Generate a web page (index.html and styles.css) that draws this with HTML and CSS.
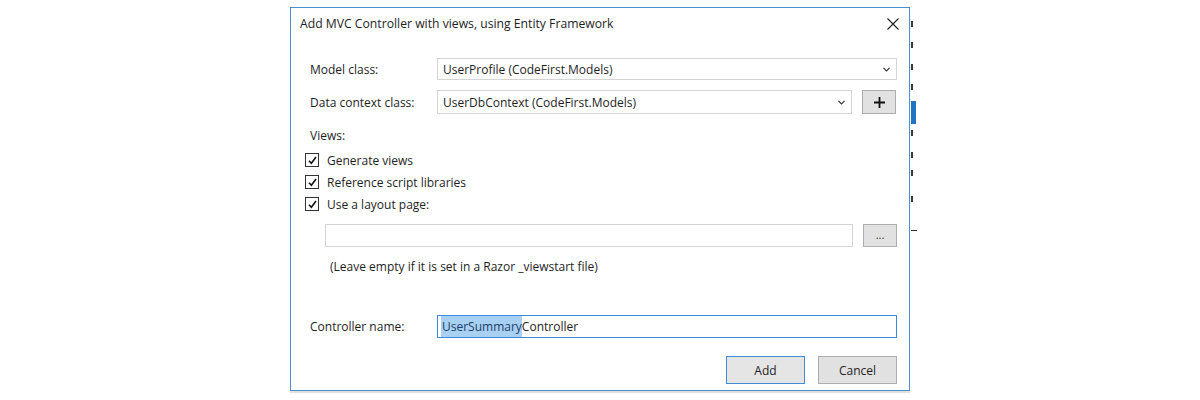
FILE: index.html
```html
<!DOCTYPE html>
<html>
<head>
<meta charset="utf-8">
<link rel="stylesheet" href="styles.css">
</head>
<body>
<div class="desk">
  <div class="dialog">
    <div class="titlebar">
      <span class="title">Add MVC Controller with views, using Entity Framework</span>
      <svg class="close" width="12" height="12" viewBox="0 0 12 12"><path d="M0.5 0.5 L11.5 11.5 M11.5 0.5 L0.5 11.5" stroke="#1e1e1e" stroke-width="1.1" fill="none"/></svg>
    </div>
    <div class="body">
      <div class="row r1">
        <span class="label">Model class:</span>
        <div class="combo wide"><span>UserProfile (CodeFirst.Models)</span><svg class="chev" width="7" height="5" viewBox="0 0 7 5"><path d="M0.5 0.8 L3.5 3.8 L6.5 0.8" stroke="#333" stroke-width="1.2" fill="none"/></svg></div>
      </div>
      <div class="row r2">
        <span class="label">Data context class:</span>
        <div class="combo narrow"><span>UserDbContext (CodeFirst.Models)</span><svg class="chev" width="7" height="5" viewBox="0 0 7 5"><path d="M0.5 0.8 L3.5 3.8 L6.5 0.8" stroke="#333" stroke-width="1.2" fill="none"/></svg></div>
        <div class="btn sq plus"><svg width="11" height="11" viewBox="0 0 11 11"><path d="M5.5 0 V11 M0 5.5 H11" stroke="#111" stroke-width="1.8" fill="none"/></svg></div>
      </div>
      <div class="views">Views:</div>
      <div class="checks">
        <div class="check"><span class="box"><svg width="9" height="9" viewBox="0 0 9 9"><path d="M1 4.8 L3.4 7.3 L8 1" stroke="#111" stroke-width="1.6" fill="none"/></svg></span><span>Generate views</span></div>
        <div class="check"><span class="box"><svg width="9" height="9" viewBox="0 0 9 9"><path d="M1 4.8 L3.4 7.3 L8 1" stroke="#111" stroke-width="1.6" fill="none"/></svg></span><span>Reference script libraries</span></div>
        <div class="check"><span class="box"><svg width="9" height="9" viewBox="0 0 9 9"><path d="M1 4.8 L3.4 7.3 L8 1" stroke="#111" stroke-width="1.6" fill="none"/></svg></span><span>Use a layout page:</span></div>
      </div>
      <div class="row r3">
        <div class="field path"></div>
        <div class="btn sq dots">...</div>
      </div>
      <div class="hint">(Leave empty if it is set in a Razor _viewstart file)</div>
      <div class="row r4">
        <span class="label">Controller name:</span>
        <div class="field name"><span class="sel">UserSummary</span>Controller</div>
      </div>
      <div class="actions">
        <div class="btn act default">Add</div>
        <div class="btn act">Cancel</div>
      </div>
    </div>
  </div>
  <div class="behind">
    <i class="m" style="margin-top:14px"></i>
    <i class="m" style="margin-top:15px"></i>
    <i class="m" style="margin-top:16px"></i>
    <i class="m" style="margin-top:14px"></i>
    <i class="blue"></i>
    <i class="m" style="margin-top:6px"></i>
    <i class="m" style="margin-top:16px"></i>
    <i class="m" style="margin-top:12px"></i>
    <i class="m" style="margin-top:20px"></i>
    <i class="line"></i>
  </div>
</div>
</body>
</html>
```
FILE: styles.css
```css
* { box-sizing: border-box; }
html, body { margin: 0; padding: 0; background: #fff; }
body {
  font-family: "Open Sans", "Noto Sans", "Liberation Sans", sans-serif;
  font-size: 12px;
  color: #1e1e1e;
  width: 1200px;
  height: 400px;
  overflow: hidden;
}
.desk { display: flex; align-items: flex-start; padding-left: 290px; padding-top: 7px; }
.dialog {
  width: 620px;
  height: 384px;
  border: 1px solid #4a8fd4;
  background: #fff;
  display: flex;
  flex-direction: column;
  box-shadow: 0 2px 1px rgba(0,0,0,0.12);
}
.titlebar {
  height: 31px;
  display: flex;
  align-items: center;
  padding-left: 9px;
  padding-right: 10px;
  justify-content: space-between;
}
.title { font-size: 12.2px; }
.close { margin-top: 0px; }
.body { padding: 19px 12px 0 19px; display: flex; flex-direction: column; }
.row { display: flex; align-items: center; }
.label { width: 127px; flex: none; }
.r1 { height: 22px; }
.r2 { height: 24px; margin-top: 10px; }
.combo {
  height: 100%;
  border: 1px solid #d4d4d4;
  background: #fff;
  display: flex;
  align-items: center;
  justify-content: space-between;
  padding: 0 6px 0 5px;
}
.combo.wide { width: 460px; }
.combo.narrow { width: 415px; }
.chev { margin-top: 1px; }
.btn {
  border: 1px solid #adadad;
  background: #e1e1e1;
  display: flex;
  align-items: center;
  justify-content: center;
}
.sq { width: 34px; height: 24px; margin-left: 10px; }
.dots { height: 23px; font-size: 11px; line-height: 1; padding-bottom: 3px; color: #333; }
.views { margin-top: 13px; line-height: 18px; }
.checks { margin-top: 4px; margin-left: -5px; }
.check { display: flex; align-items: center; height: 22px; }
.box {
  width: 14px; height: 14px;
  border: 1px solid #333;
  background: #fff;
  display: flex; align-items: center; justify-content: center;
  margin-right: 8px;
}
.r3 { margin-top: 9px; margin-left: 15px; height: 23px; }
.field { border: 1px solid #d4d4d4; background: #fff; height: 100%; }
.path { width: 528px; }
.hint { margin-top: 11px; margin-left: 20px; line-height: 18px; }
.r4 { margin-top: 39px; height: 23px; }
.name {
  width: 460px;
  border-color: #3b8ad7;
  display: flex; align-items: center;
  padding-left: 3px;
}
.sel { background: #a8d0f3; color: #1c3f6a; padding: 2px 0 2px 1px; }
.actions { display: flex; justify-content: flex-end; margin-top: 18px; gap: 13px; padding-right: 0; }
.act { width: 79px; height: 28px; font-size: 12px; }
.act.default { border-color: #3f8bd5; background: #e5e5e5; }
.behind { display: flex; flex-direction: column; padding-left: 1px; }
.m { display: block; width: 2px; height: 6px; background: #3a3a3a; }
.blue { display: block; width: 5px; height: 23px; background: #2273c3; margin-top: 11px; }
.line { display: block; width: 6px; height: 1px; background: #333; margin-top: 28px; }
```
